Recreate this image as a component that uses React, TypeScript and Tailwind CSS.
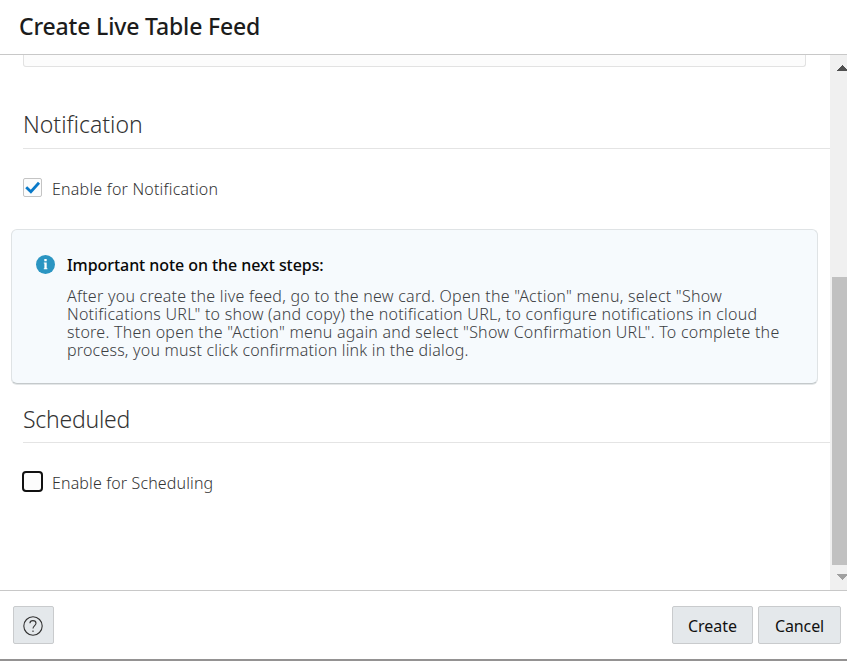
import type { ReactNode } from "react";

function Header() {
  return (
    <header className="h-[55px] shrink-0 border-b border-[#c8c8c8] pl-[19px]">
      <h1 className="whitespace-nowrap text-[23px] font-medium leading-[52px] tracking-[-0.16px] text-[#1c1c1c]">
        Create Live Table Feed
      </h1>
    </header>
  );
}

function SectionTitle({ children }: { children: ReactNode }) {
  return (
    <h2 className="ml-[23px] border-b border-[#e4e4e4] text-[23px] font-light leading-[34px] text-[#333]">
      {children}
    </h2>
  );
}

function InfoNote() {
  return (
    <aside className="ml-[11px] mr-3 flex h-[155px] rounded-[6px] border border-[#dfe3e5] border-b-[#c4c9cb] bg-[#f6fafd] pl-6 pt-[25px] shadow-[0_1px_0_#e4e7e8]">
      <svg className="h-[19px] w-[19px] shrink-0" viewBox="0 0 19 19">
        <circle cx="9.5" cy="9.5" r="9.5" fill="#2b95c2" />
        <path d="M8.3 4h2.4v2.2H8.3zM7.8 7.5h2.9v5.8h0.7v1H7.8v-1h0.6V8.5h-.6z" fill="#fff" />
      </svg>
      <div className="ml-3 whitespace-nowrap">
        <h3 className="h-8 text-[16px] font-medium leading-[20px] tracking-[-0.06px] text-[#080808]">
          Important note on the next steps:
        </h3>
        <div className="text-[16px] leading-[18px] text-[#3c4043]">
          <p className="font-light tracking-[0.253px]">After you create the live feed, go to the new card. Open the "Action" menu, select "Show</p>
          <p className="font-light tracking-[0.257px]">Notifications URL" to show (and copy) the notification URL, to configure notifications in cloud</p>
          <p className="font-light tracking-[0.235px]">store. Then open the "Action" menu again and select "Show Confirmation URL". To complete the</p>
          <p className="font-light tracking-[0.2px]">process, you must click confirmation link in the dialog.</p>
        </div>
      </div>
    </aside>
  );
}

function Scrollbar() {
  return (
    <div className="flex w-[17px] shrink-0 flex-col bg-[#f0f0f0] pl-[2px]">
      <svg className="ml-[5px] mt-[10px] h-[6px] w-[10px]" viewBox="0 0 10 6" shapeRendering="crispEdges">
        <path d="M0 6L5.5 0L11 6z" fill="#505050" />
      </svg>
      <div className="mt-[206px] h-[288px] bg-[#c1c1c1]" />
      <svg className="ml-[5px] mt-[9px] h-[6px] w-[10px]" viewBox="0 0 10 6" shapeRendering="crispEdges">
        <path d="M0 0h11L5.5 6z" fill="#a0a0a0" />
      </svg>
    </div>
  );
}

export default function App() {
  return (
    <div className="flex h-[661px] w-[847px] flex-col overflow-hidden border-b-2 border-[#949292] bg-white font-['Noto_Sans','Open_Sans',sans-serif]">
      <Header />
      <main className="flex h-[535px] shrink-0">
        <div className="w-[830px] overflow-hidden">
          <div className="ml-[23px] h-3 w-[783px] rounded-b-[3px] border border-t-0 border-[#e2e2e2] bg-[#fcfcfc]" />
          <div className="h-10" />
          <SectionTitle>
            <span className="block h-[41px]">Notification</span>
          </SectionTitle>
          <label className="ml-[23px] mt-[29px] flex h-5 items-start">
            <span className="h-[19px] w-[19px] rounded-[2px] border border-[#c4c4c4] bg-[#fcfcfc]">
              <svg viewBox="0 0 17 17" className="h-[17px] w-[17px]">
                <path d="M2.2 8.2L6.9 12.8L15 3.8" fill="none" stroke="#0879c8" strokeWidth="2.8" />
              </svg>
            </span>
            <span className="ml-[10px] whitespace-nowrap text-[16px] font-light leading-[22px] tracking-[0.21px] text-[#333]">
              Enable for Notification
            </span>
          </label>
          <div className="h-[31px]" />
          <InfoNote />
          <div className="h-[18px]" />
          <SectionTitle>
            <span className="block h-10 tracking-[-0.25px]">Scheduled</span>
          </SectionTitle>
          <label className="ml-[22px] mt-[28px] flex h-[21px] items-start">
            <span className="h-[21px] w-[21px] rounded-[4px] border-2 border-[#111] bg-[#fcfcfc]" />
            <span className="ml-[9px] whitespace-nowrap text-[16px] font-light leading-[24px] tracking-[0.13px] text-[#333]">
              Enable for Scheduling
            </span>
          </label>
        </div>
        <Scrollbar />
      </main>
      <footer className="flex flex-1 items-start border-t border-[#c8c8c8] pl-[13px] pr-[6px] pt-[15px]">
        <button className="flex h-[38px] w-[41px] items-center justify-center rounded-[2px] border border-[#c9cbcd] bg-[#e4e8eb] pr-px pt-px">
          <svg viewBox="0 0 20 20" className="h-5 w-5" fill="none" stroke="#333" strokeWidth="1.1">
            <circle cx="10" cy="10" r="9.2" />
            <path d="M6.9 7.2C7 5.5 8.2 4.6 9.9 4.6C11.7 4.6 13 5.5 13 7.2C13 9.5 10 9.7 10 12.6" />
            <path d="M10 14.6v1.3" />
          </svg>
        </button>
        <button className="ml-auto h-[38px] w-[81px] rounded-[2px] border border-[#c9cbcd] bg-[#e4e8eb] pt-0.5 text-[16px] text-[#111]">Create</button>
        <button className="ml-[5px] h-[38px] w-[83px] rounded-[2px] border border-[#c9cbcd] bg-[#e4e8eb] pt-0.5 text-[16px] tracking-[-0.1px] text-[#111]">Cancel</button>
      </footer>
    </div>
  );
}
